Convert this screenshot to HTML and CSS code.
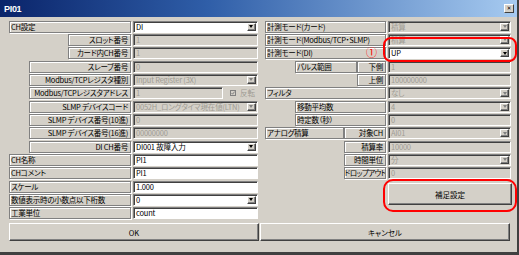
FILE: index.html
```html
<!DOCTYPE html>
<html lang="ja">
<head>
<meta charset="utf-8">
<title>PI01</title>
<link rel="stylesheet" href="styles.css">
</head>
<body>
<div class="win">
  <div class="title">
    <span class="ttext">PI01</span>
    <span class="close">✕</span>
  </div>
  <div class="main">
    <div class="grid lgrid">
      <div class="lbl c-all">CH設定</div>
      <div class="sel lf"><span class="v">DI</span><span class="arr"></span></div>

      <div class="lbl r c3">スロット番号</div>
      <div class="fld dis lf"><span class="v">1</span></div>

      <div class="lbl r c3">カード内CH番号</div>
      <div class="fld dis lf"><span class="v">1</span></div>

      <div class="lbl r c23">スレーブ番号</div>
      <div class="fld dis lf"><span class="v">0</span></div>

      <div class="lbl r c23">Modbus/TCPレジスタ種別</div>
      <div class="sel dis lf"><span class="v">Input Register (3X)</span><span class="arr"></span></div>

      <div class="lbl r c23">Modbus/TCPレジスタアドレス</div>
      <div class="lf addr">
        <div class="fld dis short"><span class="v">1</span></div>
        <span class="chk"><svg width="4" height="4" viewBox="0 0 4 4"><path d="M0.5 2 L1.6 3.2 L3.6 0.6" fill="none" stroke="#808080" stroke-width="1"/></svg></span>
        <span class="chktxt">反転</span>
      </div>

      <div class="lbl r c23">SLMP デバイスコード</div>
      <div class="sel dis lf"><span class="v">0052H_ロングタイマ現在値(LTN)</span><span class="arr"></span></div>

      <div class="lbl r c23">SLMP デバイス番号(10進)</div>
      <div class="fld dis lf"><span class="v">0</span></div>

      <div class="lbl r c23">SLMP デバイス番号(16進)</div>
      <div class="fld dis lf"><span class="v">00000000</span></div>

      <div class="lbl r c23">DI CH番号</div>
      <div class="sel lf"><span class="v">DI001 故障入力</span><span class="arr"></span></div>

      <div class="lbl c-all">CH名称</div>
      <div class="fld lf"><span class="v">PI1</span></div>

      <div class="lbl c-all">CHコメント</div>
      <div class="fld lf"><span class="v">PI1</span></div>

      <div class="lbl c-all">スケール</div>
      <div class="fld lf"><span class="v">1.000</span></div>

      <div class="lbl c-all">数値表示時の小数点以下桁数</div>
      <div class="sel lf"><span class="v">0</span><span class="arr"></span></div>

      <div class="lbl c-all">工業単位</div>
      <div class="fld lf"><span class="v">count</span></div>
    </div>

    <div class="rcol">
      <div class="grid rgrid">
        <div class="lbl rc-all">計測モード(カード)</div>
        <div class="sel dis rf"><span class="v">積算</span><span class="arr"></span></div>

        <div class="lbl rc-all">計測モード(Modbus/TCP・SLMP)</div>
        <div class="sel dis rf"><span class="v">積算</span><span class="arr"></span></div>

        <div class="lbl rc-all">計測モード(DI)</div>
        <div class="sel rf"><span class="v">UP</span><span class="arr"></span></div>

        <div class="lbl rc-23">パルス範囲</div>
        <div class="lbl r rc-4">下側</div>
        <div class="fld dis rf"><span class="v">1</span></div>

        <div class="lbl r rc-4">上側</div>
        <div class="fld dis rf"><span class="v">100000000</span></div>

        <div class="lbl rc-all">フィルタ</div>
        <div class="sel dis rf"><span class="v">なし</span><span class="arr"></span></div>

        <div class="lbl rc-234">移動平均数</div>
        <div class="sel dis rf"><span class="v">4</span><span class="arr"></span></div>

        <div class="lbl rc-234">時定数（秒）</div>
        <div class="fld dis rf"><span class="v">0</span></div>

        <div class="lbl rc-12">アナログ積算</div>
        <div class="lbl r rc-34">対象CH</div>
        <div class="sel dis rf"><span class="v">AI01</span><span class="arr"></span></div>

        <div class="lbl r rc-34">積算率</div>
        <div class="fld dis rf"><span class="v">10000</span></div>

        <div class="lbl r rc-34">時間単位</div>
        <div class="sel dis rf"><span class="v">分</span><span class="arr"></span></div>

        <div class="lbl r rc-34 tight">ドロップアウト</div>
        <div class="fld dis rf"><span class="v">0</span></div>
      </div>
      <div class="btn supp">補足設定</div>
    </div>
  </div>
  <div class="btnrow">
    <div class="btn wide">OK</div>
    <div class="btn wide">キャンセル</div>
  </div>

  <div class="mark m1"></div>
  <div class="mark m2"></div>
  <span class="num">①</span>
</div>
</body>
</html>
```

FILE: styles.css
```css
* { box-sizing: border-box; margin: 0; padding: 0; }
html, body { width: 519px; height: 255px; overflow: hidden; }
body {
  background: #d4d0c8;
  font-family: "Noto Sans CJK JP", "Noto Sans", sans-serif;
  font-size: 7.5px;
  color: #000;
  font-feature-settings: "palt";
}
.win {
  position: relative;
  width: 519px;
  height: 255px;
  display: flex;
  flex-direction: column;
  border-right: 2px solid #404040;
  border-bottom: 3px solid #404040;
}
.title {
  height: 17px;
  flex: none;
  display: flex;
  align-items: center;
  padding: 0 3px 0 4px;
  background: linear-gradient(to right, #0a246a 0%, #2f5ea8 40%, #a6caf0 100%);
}
.ttext {
  color: #fff;
  font-family: "Liberation Sans", sans-serif;
  font-weight: bold;
  font-size: 9px;
  letter-spacing: -0.3px;
}
.close {
  margin-left: auto;
  width: 10px;
  height: 9px;
  background: #d4d0c8;
  border: 1px solid;
  border-color: #fff #404040 #404040 #fff;
  font-size: 5.5px;
  line-height: 7px;
  text-align: center;
  font-family: "DejaVu Sans", sans-serif;
  font-weight: bold;
}
.main {
  display: flex;
  gap: 7px;
  padding: 3.67px 0 0 9px;
  flex: none;
}
.grid {
  display: grid;
  grid-auto-rows: 12px;
  row-gap: 1.333px;
}
.lgrid {
  width: 249px;
  grid-template-columns: 20.33px 39px 62.67px 2px 125px;
}
.rcol {
  width: 246px;
  display: flex;
  flex-direction: column;
}
.rgrid {
  grid-template-columns: 30px 48.5px 13.5px 29px 2px 123px;
}
.c-all { grid-column: 1 / 4; }
.c3 { grid-column: 3 / 4; }
.c23 { grid-column: 2 / 4; }
.lf { grid-column: 5 / 6; }
.rc-all { grid-column: 1 / 5; }
.rc-23 { grid-column: 2 / 4; }
.rc-4 { grid-column: 4 / 5; }
.rc-234 { grid-column: 2 / 5; }
.rc-12 { grid-column: 1 / 3; }
.rc-34 { grid-column: 3 / 5; }
.rf { grid-column: 6 / 7; }

.lbl {
  border: 1px solid #808080;
  box-shadow: inset 1px 1px #fff, 1px 1px #fff;
  line-height: 10px;
  padding: 0 1px 0 1px;
  white-space: nowrap;
  overflow: hidden;
  letter-spacing: -0.25px;
}
.lbl.r { text-align: right; padding: 0 2px 0 0; }
.lbl.tight { letter-spacing: -0.6px; padding-right: 1px; }

.fld, .sel {
  display: flex;
  background: #fff;
  border: 1px solid;
  border-color: #808080 #fff #fff #808080;
  box-shadow: inset 1px 1px #404040;
  line-height: 10px;
  white-space: nowrap;
  overflow: hidden;
  letter-spacing: -0.2px;
}
.fld.dis, .sel.dis { background: #d4d0c8; color: #a09c94; }
.v { flex: 1; padding-left: 2px; overflow: hidden; }
.arr {
  flex: none;
  width: 9px;
  height: 8px;
  margin: 1px 1px 0 0;
  background: #d4d0c8;
  border: 1px solid;
  border-color: #fff #404040 #404040 #fff;
  box-shadow: inset -1px -1px #808080;
  display: flex;
  align-items: center;
  justify-content: center;
}
.arr::before {
  content: "";
  border-left: 2.5px solid transparent;
  border-right: 2.5px solid transparent;
  border-top: 3px solid #000;
}
.sel.dis .arr::before { border-top-color: #808080; }

.addr {
  display: flex;
  align-items: center;
}
.addr .short { width: 90px; height: 12px; }
.chk {
  width: 6px;
  height: 6px;
  margin-left: 7px;
  border: 1px solid #808080;
  background: #d4d0c8;
  display: flex;
}
.chk svg { width: 4px; height: 4px; }
.chktxt { margin-left: 4px; color: #a09c94; line-height: 10px; }

.btn {
  background: #d4d0c8;
  border: 1px solid;
  border-color: #fff #404040 #404040 #fff;
  box-shadow: inset -1px -1px #808080;
  display: flex;
  align-items: center;
  justify-content: center;
}
.supp {
  margin: 4px 0 0 123px;
  width: 124px;
  height: 22px;
}
.btnrow {
  display: flex;
  gap: 1px;
  padding-left: 9px;
  margin-top: 4px;
}
.wide { width: 250px; height: 18px; }

.mark {
  position: absolute;
  border: 2px solid #f00;
}
.m1 { left: 383px; top: 37px; width: 134px; height: 24.5px; border-radius: 8px; }
.m2 { left: 383px; top: 179px; width: 134px; height: 33px; border-radius: 10px; }
.num {
  position: absolute;
  left: 366px;
  top: 46px;
  color: #f00;
  font-size: 11px;
  line-height: 12px;
}
```
